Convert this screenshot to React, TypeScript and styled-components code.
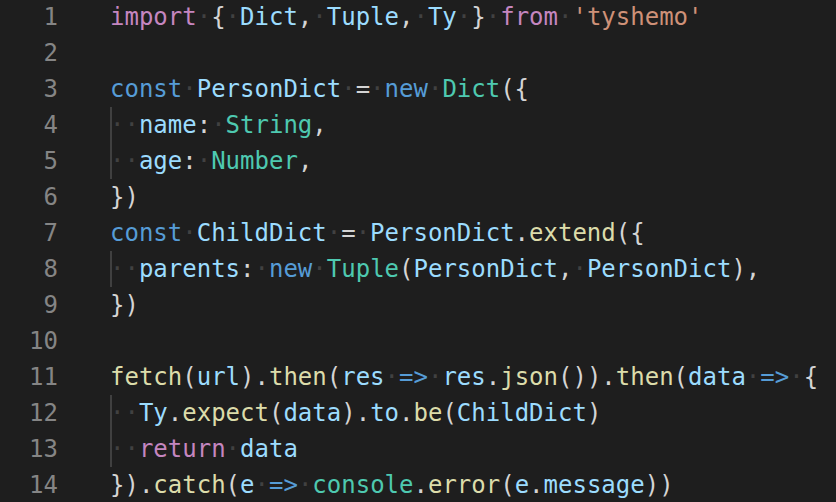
import React from "react";
import styled, { createGlobalStyle } from "styled-components";

const Global = createGlobalStyle`
  html, body {
    margin: 0;
    padding: 0;
    background: #1e1e1e;
    width: 836px;
    height: 502px;
    overflow: hidden;
  }
`;

const Editor = styled.div`
  display: flex;
  flex-direction: column;
  margin-top: -1px;
  font-family: "DejaVu Sans Mono", "Liberation Mono", monospace;
  font-size: 24px;
  background: #1e1e1e;
  color: #d4d4d4;
`;

const Line = styled.div`
  display: flex;
  align-items: stretch;
  height: 36px;
  line-height: 36px;
  white-space: pre;
`;

const LineNo = styled.span`
  width: 58px;
  flex: none;
  text-align: right;
  color: #858585;
  margin-right: 52px;
`;

const Code = styled.span<{ $guide: boolean }>`
  flex: 1;
  background-image: ${(p) =>
    p.$guide ? "linear-gradient(#404040, #404040)" : "none"};
  background-size: 2px 100%;
  background-repeat: no-repeat;
  background-position: 0 0;
`;

type Kind = "kw" | "st" | "v" | "t" | "s" | "f" | "p" | "w";

const colors: Record<Kind, string> = {
  kw: "#c586c0",
  st: "#569cd6",
  v: "#9cdcfe",
  t: "#4ec9b0",
  s: "#ce9178",
  f: "#dcdcaa",
  p: "#d4d4d4",
  w: "#414141",
};

const Tok = styled.span<{ $k: Kind }>`
  color: ${(p) => colors[p.$k]};
`;

type T = [Kind, string];
const W: T = ["w", "·"];
const W2: T = ["w", "··"];

const lines: { guide?: boolean; toks: T[] }[] = [
  {
    toks: [
      ["kw", "import"], W, ["p", "{"], W, ["v", "Dict"], ["p", ","], W,
      ["v", "Tuple"], ["p", ","], W, ["v", "Ty"], W, ["p", "}"], W,
      ["kw", "from"], W, ["s", "'tyshemo'"],
    ],
  },
  { toks: [] },
  {
    toks: [
      ["st", "const"], W, ["v", "PersonDict"], W, ["p", "="], W,
      ["st", "new"], W, ["t", "Dict"], ["p", "({"],
    ],
  },
  {
    guide: true,
    toks: [W2, ["v", "name"], ["p", ":"], W, ["t", "String"], ["p", ","]],
  },
  {
    guide: true,
    toks: [W2, ["v", "age"], ["p", ":"], W, ["t", "Number"], ["p", ","]],
  },
  { toks: [["p", "})"]] },
  {
    toks: [
      ["st", "const"], W, ["v", "ChildDict"], W, ["p", "="], W,
      ["v", "PersonDict"], ["p", "."], ["f", "extend"], ["p", "({"],
    ],
  },
  {
    guide: true,
    toks: [
      W2, ["v", "parents"], ["p", ":"], W, ["st", "new"], W, ["t", "Tuple"],
      ["p", "("], ["v", "PersonDict"], ["p", ","], W, ["v", "PersonDict"],
      ["p", "),"],
    ],
  },
  { toks: [["p", "})"]] },
  { toks: [] },
  {
    toks: [
      ["f", "fetch"], ["p", "("], ["v", "url"], ["p", ")."], ["f", "then"],
      ["p", "("], ["v", "res"], W, ["st", "=>"], W, ["v", "res"], ["p", "."],
      ["f", "json"], ["p", "())."], ["f", "then"], ["p", "("], ["v", "data"],
      W, ["st", "=>"], W, ["p", "{"],
    ],
  },
  {
    guide: true,
    toks: [
      W2, ["v", "Ty"], ["p", "."], ["f", "expect"], ["p", "("], ["v", "data"],
      ["p", ")."], ["v", "to"], ["p", "."], ["f", "be"], ["p", "("],
      ["v", "ChildDict"], ["p", ")"],
    ],
  },
  { guide: true, toks: [W2, ["kw", "return"], W, ["v", "data"]] },
  {
    toks: [
      ["p", "})."], ["f", "catch"], ["p", "("], ["v", "e"], W, ["st", "=>"],
      W, ["t", "console"], ["p", "."], ["f", "error"], ["p", "("], ["v", "e"],
      ["p", "."], ["v", "message"], ["p", "))"],
    ],
  },
];

export default function App() {
  return (
    <>
      <Global />
      <Editor>
        {lines.map((l, i) => (
          <Line key={i}>
            <LineNo>{i + 1}</LineNo>
            <Code $guide={!!l.guide}>
              {l.toks.map(([k, s], j) => (
                <Tok key={j} $k={k}>
                  {s}
                </Tok>
              ))}
            </Code>
          </Line>
        ))}
      </Editor>
    </>
  );
}
